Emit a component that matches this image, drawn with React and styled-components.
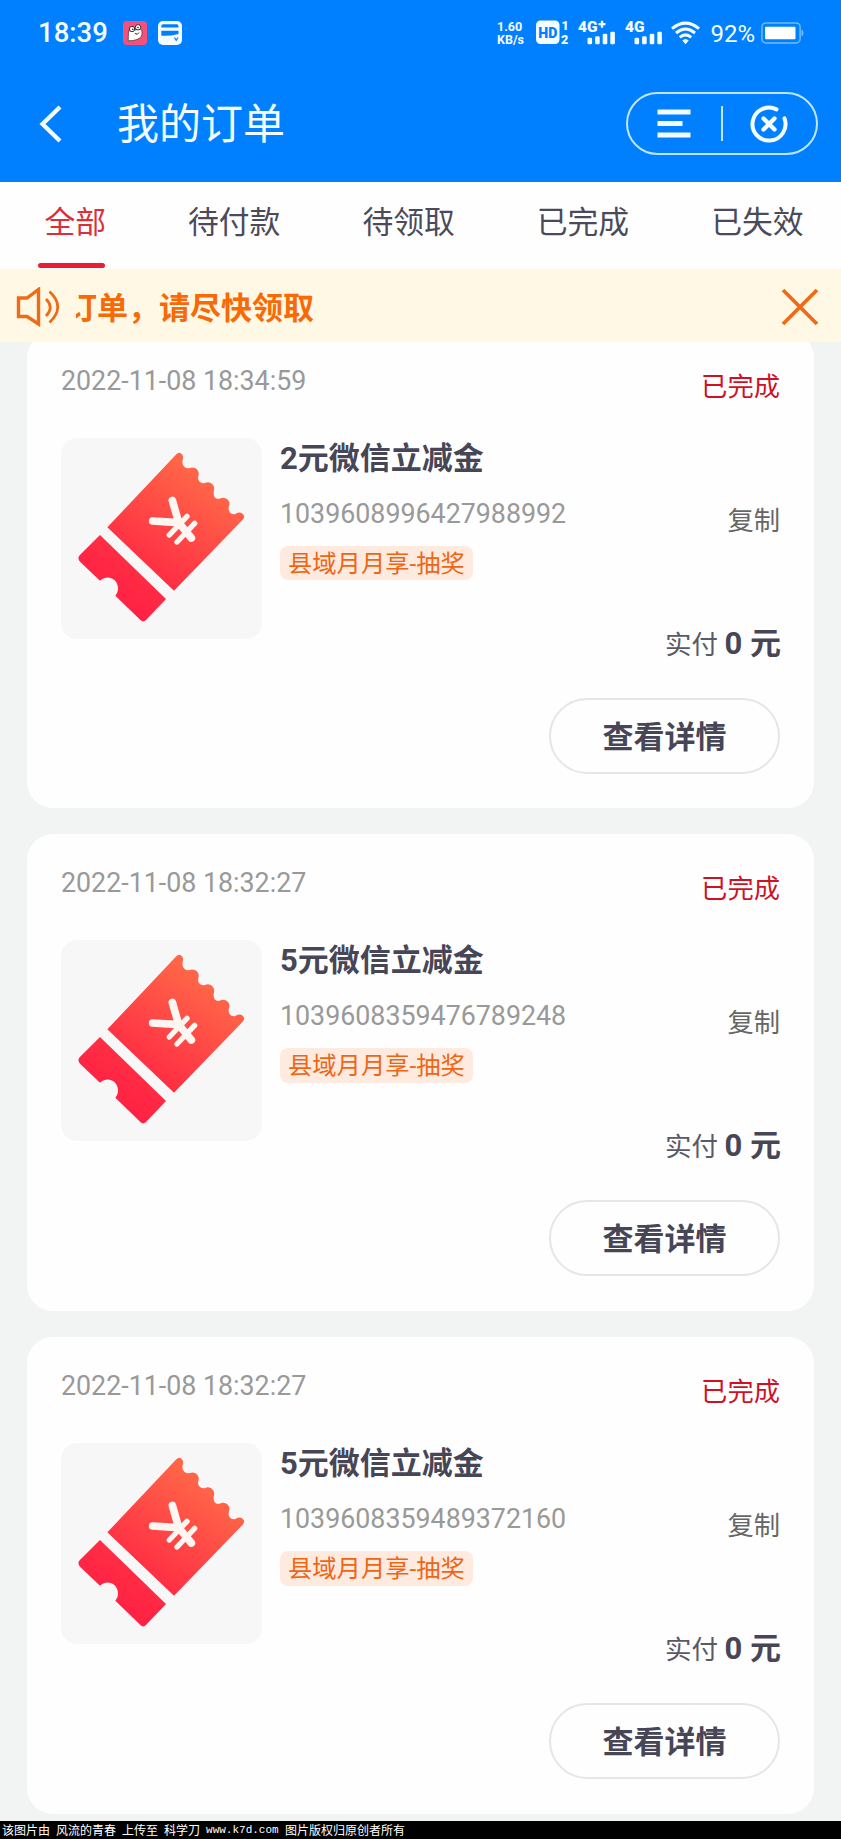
import React, { useState } from "react";
import styled, { createGlobalStyle } from "styled-components";

const tabs = ["全部", "待付款", "待领取", "已完成", "已失效"];

const orders = [
  {
    date: "2022-11-08 18:34:59",
    title: "2元微信立减金",
    number: "1039608996427988992",
  },
  {
    date: "2022-11-08 18:32:27",
    title: "5元微信立减金",
    number: "1039608359476789248",
  },
  {
    date: "2022-11-08 18:32:27",
    title: "5元微信立减金",
    number: "1039608359489372160",
  },
];

function AppIcon() {
  return (
    <svg width="24" height="24" viewBox="0 0 24 24">
      <rect width="24" height="24" rx="4" fill="#f4507c" />
      <path
        d="M5.500 10 L5.200 19.800 Q10 20 14 18.500 Q19.500 16.500 19 11 Q19 9 17.500 8Z"
        fill="#fff"
        stroke="#333"
        strokeWidth="0.700"
      />
      <circle cx="9" cy="8" r="2.700" fill="#fff" stroke="#222" strokeWidth="0.900" />
      <circle cx="15" cy="6.300" r="2.700" fill="#fff" stroke="#222" strokeWidth="0.900" />
      <circle cx="9.700" cy="8.300" r="0.800" fill="#222" />
      <circle cx="15" cy="6.500" r="0.800" fill="#222" />
      <path d="M12 12.500 Q14.500 14.500 16 11.500" fill="none" stroke="#222" />
    </svg>
  );
}

function CardIcon() {
  return (
    <svg width="24" height="24" viewBox="0 0 24 24">
      <rect width="24" height="24" rx="5" fill="#f4fcff" />
      <path
        d="M3.300 5.300 Q3.300 3.300 5 3.300 H19 Q20.500 3.300 20.500 5.300 V6.600 H3.300Z M3.300 9.700 H20.500 V13 Q12 15.200 3.300 14.800Z"
        fill="#0080ff"
      />
      <path
        d="M16.500 16.500 L18.200 19.300 L20 16.500"
        fill="none"
        stroke="#0080ff"
        strokeWidth="1.200"
      />
    </svg>
  );
}

function HdIcon() {
  return (
    <svg width="34" height="25" viewBox="0 0 34 25" overflow="visible">
      <rect y="0.500" width="23.500" height="23.500" rx="4.500" fill="#f4fcff" />
      <SvgText x="2.300" y="17.500" size={14} textLength="19" tone="#0080ff">
        HD
      </SvgText>
      <SvgText x="25.500" y="10" size={12.5}>
        1
      </SvgText>
      <SvgText x="25" y="23.800" size={12.5}>
        2
      </SvgText>
    </svg>
  );
}

function Signal({ label, plus }) {
  return (
    <svg width="38" height="25" viewBox="0 0 38 25" overflow="visible">
      <SvgText x="0" y="11.800" size={14.5} textLength="19.500">
        {label}
      </SvgText>
      {plus && <path d="M20.500 4.200 H27.500 M24 0.700 V7.700" stroke="#f4fcff" strokeWidth="2.300" />}
      {[6.5, 8, 10.5, 12.5].map((height, i) => (
        <rect
          key={height}
          x={9.5 + i * 7.6}
          y={24.2 - height}
          width="4.600"
          height={height}
          rx="1.300"
          fill="#f4fcff"
        />
      ))}
    </svg>
  );
}

function WifiIcon() {
  return (
    <svg width="29" height="24" viewBox="0 0 29 24">
      <g fill="none" stroke="#f4fcff" strokeWidth="3">
        <path d="M1 7.600 Q14.500 -3.400 28 7.600" />
        <path d="M5 12 Q14.500 4 24 12" />
        <path d="M8.800 16.300 Q14.500 11.500 20.200 16.300" />
      </g>
      <path d="M11.300 19.600 Q14.500 16.600 17.700 19.600 L14.500 23.300Z" fill="#f4fcff" />
    </svg>
  );
}

function BatteryIcon() {
  return (
    <svg width="43" height="22" viewBox="0 0 43 22">
      <rect
        x="0.900"
        y="0.900"
        width="38.200"
        height="20"
        rx="4"
        fill="none"
        stroke="#72bcff"
        strokeWidth="1.500"
      />
      <rect x="4" y="4.800" width="30.500" height="12.500" rx="1" fill="#fff" />
      <path d="M40.500 7.500 Q42.500 8 42.500 11 Q42.500 14 40.500 14.500Z" fill="#72bcff" />
    </svg>
  );
}

function TicketIcon({ id }) {
  return (
    <svg width="201" height="201" viewBox="0 0 603 603">
      <defs>
        <linearGradient
          id={id}
          gradientUnits="userSpaceOnUse"
          x1="180"
          y1="520"
          x2="450"
          y2="140"
        >
          <stop offset="0" stopColor="#ff2045" />
          <stop offset="0.300" stopColor="#ff2d44" />
          <stop offset="1" stopColor="#ff6548" />
        </linearGradient>
      </defs>
      <g fill={`url(#${id})`}>
        <path d="M139 268 L346 49 Q354 40 362 48 Q368 53 366 62 C360 78 370 94 386 90 C402 83 418 98 412 114 C408 128 420 139 432 135 C448 127 463 143 459 157 C455 175 463 185 476 182 C493 173 511 190 504 204 C499 220 511 233 524 227 Q540 219 548 231 Q552 237 545 245 L339 458Z" />
        <path d="M117 291 L315 483 L255 546 Q247 554 239 547 L163 473 C174 462 174 441 161 427 C147 415 131 417 117 428 L57 371 Q48 361 56 352Z" />
      </g>
      <g stroke="#fff5f1" strokeLinecap="round" fill="none">
        <path
          d="M334 187 L353 254 L275 249 M353 254 L391 300"
          strokeWidth="23"
          strokeLinejoin="round"
        />
        <path d="M325 291 L378 235 M348 312 L401 256" strokeWidth="16" />
      </g>
    </svg>
  );
}

function SpeakerIcon() {
  return (
    <svg width="44" height="40" viewBox="0 0 44 40">
      <g fill="none" stroke="#ee6c17" strokeWidth="3.400">
        <path d="M2.500 11 H11 L22.500 2.500 V37 L11 29.500 H2.500Z" />
        <path d="M30 12 Q38.500 20.500 30 29" strokeWidth="2.800" />
        <path d="M33.500 4.500 Q50 20 33.500 35.500" strokeWidth="2.800" />
      </g>
    </svg>
  );
}

function OrderCard({ id, order }) {
  return (
    <Card>
      <CardHead>
        <OrderDate>{order.date}</OrderDate>
        <Status>已完成</Status>
      </CardHead>
      <CardBody>
        <Thumbnail>
          <TicketIcon id={id} />
        </Thumbnail>
        <Details>
          <Title>{order.title}</Title>
          <NumberRow>
            <OrderNumber>{order.number}</OrderNumber>
            <CopyButton type="button">复制</CopyButton>
          </NumberRow>
          <Tag>县域月月享-抽奖</Tag>
        </Details>
      </CardBody>
      <Payment>
        实付 <Amount>0 元</Amount>
      </Payment>
      <DetailButton type="button">查看详情</DetailButton>
    </Card>
  );
}

function App() {
  const [active, setActive] = useState("全部");
  const [showNotice, setShowNotice] = useState(true);

  return (
    <>
      <GlobalStyle />
      <Page>
        <Header>
          <StatusBar>
            <Clock>18:39</Clock>
            <AppIcon />
            <CardIcon />
            <StatusRight>
              <Speed>
                <span>1.60</span>
                <span>KB/s</span>
              </Speed>
              <HdIcon />
              <Signal label="4G" plus />
              <Signal label="4G" />
              <WifiIcon />
              <Percent>92%</Percent>
              <BatteryIcon />
            </StatusRight>
          </StatusBar>
          <NavBar>
            <BackButton type="button">
              <svg width="23" height="38" viewBox="0 0 23 38">
                <path
                  d="M21 2 L3.500 19 L21 36"
                  fill="none"
                  stroke="#f4fcff"
                  strokeWidth="4.300"
                />
              </svg>
            </BackButton>
            <PageTitle>我的订单</PageTitle>
            <Capsule>
              <svg width="34" height="29" viewBox="0 0 34 29">
                <g stroke="#f4fcff" strokeWidth="4.800">
                  <path d="M0.500 3 H33.500 M0.500 14.500 H25.500 M0.500 26 H33.500" />
                </g>
              </svg>
              <Divider />
              <svg width="38" height="38" viewBox="0 0 38 38">
                <g fill="none" stroke="#f4fcff" strokeLinecap="round">
                  <path
                    d="M26.500 4.400 A16.500 16.500 0 1 0 34.500 13.400"
                    strokeWidth="4"
                  />
                  <path
                    d="M13.500 13.500 L24.500 24.500 M24.500 13.500 L13.500 24.500"
                    strokeWidth="4.300"
                  />
                </g>
              </svg>
            </Capsule>
          </NavBar>
        </Header>
        <Tabs>
          {tabs.map((tab) => (
            <Tab
              key={tab}
              type="button"
              $active={tab === active}
              onClick={() => setActive(tab)}
            >
              <span>{tab}</span>
              {tab === active && <Underline />}
            </Tab>
          ))}
        </Tabs>
        {showNotice && (
          <Notice>
            <SpeakerIcon />
            <Marquee>
              <MarqueeText>订单，请尽快领取</MarqueeText>
            </Marquee>
            <CloseButton type="button" onClick={() => setShowNotice(false)}>
              <svg width="38" height="38" viewBox="0 0 38 38">
                <path
                  d="M2 2 L36 36 M36 2 L2 36"
                  stroke="#ee6c17"
                  strokeWidth="3.800"
                />
              </svg>
            </CloseButton>
          </Notice>
        )}
        <OrderList>
          {orders.map((order, i) => (
            <OrderCard key={order.number} id={`ticket-${i}`} order={order} />
          ))}
        </OrderList>
        <Footer>
          <span>该图片由</span>
          <span>风流的青春</span>
          <span>上传至</span>
          <span>科学刀</span>
          <Site>www.k7d.com</Site>
          <span>图片版权归原创者所有</span>
        </Footer>
      </Page>
    </>
  );
}

export default App;

const GlobalStyle = createGlobalStyle`
  * {
    box-sizing: border-box;
  }

  body {
    margin: 0;
    background: #f1f4f3;
    font-family: Roboto, "Noto Sans CJK SC", sans-serif;
  }

  button {
    padding: 0;
    border: 0;
    background: none;
    color: inherit;
    font: inherit;
  }

  svg {
    display: block;
    flex-shrink: 0;
  }
`;

const Page = styled.div`
  display: flex;
  flex-direction: column;
  width: 841px;
  height: 1839px;
  overflow: hidden;
`;

const Header = styled.header`
  flex-shrink: 0;
  height: 182px;
  background: #0080ff;
  color: #f4fcff;
`;

const StatusBar = styled.div`
  display: flex;
  align-items: center;
  height: 65px;
  padding: 0 37px 0 38px;

  & > svg {
    margin-right: 11px;
  }
`;

const Clock = styled.span`
  width: 85px;
  font-size: 27.500px;
  font-weight: 500;
`;

const StatusRight = styled.div`
  display: flex;
  align-items: center;
  gap: 8.500px;
  margin-left: auto;
`;

const Speed = styled.div`
  display: flex;
  flex-direction: column;
  width: 30px;
  font-size: 12.500px;
  font-weight: 700;
  line-height: 13px;
`;

const SvgText = styled.text.attrs({ lengthAdjust: "spacingAndGlyphs" })`
  font-family: Roboto, sans-serif;
  font-size: ${(props) => props.size}px;
  font-weight: 900;
  fill: ${(props) => props.tone || "#f4fcff"};
`;

const Percent = styled.span`
  width: 44px;
  margin: 4px -2px 0 2px;
  font-size: 24px;
  line-height: 25px;
`;

const NavBar = styled.div`
  display: flex;
  align-items: center;
  height: 117px;
  padding: 0 23px 0 39px;
`;

const BackButton = styled.button`
  width: 78px;
`;

const PageTitle = styled.h1`
  margin: 2px 0 0;
  font-size: 42px;
  font-weight: 400;
  line-height: 60px;
`;

const Capsule = styled.div`
  display: flex;
  align-items: center;
  justify-content: space-between;
  width: 192px;
  height: 63px;
  margin-left: auto;
  padding: 0 28px 0 29px;
  border: 2px solid #bfe6ff;
  border-radius: 32px;
`;

const Divider = styled.i`
  width: 2px;
  height: 35px;
  margin-left: 2px;
  background: #bfe6ff;
`;

const Tabs = styled.nav`
  display: flex;
  flex-shrink: 0;
  gap: 82px;
  height: 87px;
  padding-left: 38px;
  background: #fefefe;
`;

const Tab = styled.button`
  display: flex;
  flex-direction: column;
  align-items: flex-end;
  width: ${(props) => (props.$active ? "68px" : "auto")};
  padding-top: 18px;
  color: ${(props) => (props.$active ? "#dc2f3c" : "#4b4a5b")};
  font-size: 30.800px;
  line-height: 46px;
  white-space: nowrap;
`;

const Underline = styled.i`
  align-self: flex-start;
  width: 67px;
  height: 5.500px;
  margin-top: 16.500px;
  border-radius: 3px;
  background: #ec1c34;
`;

const Notice = styled.div`
  position: relative;
  z-index: 1;
  display: flex;
  flex-shrink: 0;
  align-items: center;
  height: 72.500px;
  padding: 4px 22px 0 16px;
  background: #fff8e5;
`;

const Marquee = styled.div`
  flex: 1;
  margin-left: 16px;
  overflow: hidden;
`;

const MarqueeText = styled.p`
  margin: 4px 0 0 -10px;
  color: #f76a05;
  font-size: 31px;
  font-weight: 700;
  line-height: 48px;
`;

const CloseButton = styled.button`
  width: 38px;
`;

const OrderList = styled.main`
  display: flex;
  flex-direction: column;
  gap: 26.250px;
  height: 1489.500px;
  margin-top: -10px;
  padding: 0 27px;
`;

const Card = styled.article`
  display: flex;
  flex-direction: column;
  flex-shrink: 0;
  height: 476.500px;
  padding: 32px 34px 0;
  border-radius: 26px;
  background: #fefefe;
`;

const CardHead = styled.div`
  display: flex;
  justify-content: space-between;
  height: 74px;
`;

const OrderDate = styled.time`
  color: #999;
  font-size: 26.800px;
  line-height: 34px;
`;

const Status = styled.span`
  color: #cf1126;
  font-size: 26.300px;
  line-height: 47px;
`;

const CardBody = styled.div`
  display: flex;
  gap: 18px;
`;

const Thumbnail = styled.div`
  width: 201px;
  height: 201px;
  border-radius: 16px;
  background: #f7f7f7;
`;

const Details = styled.div`
  flex: 1;
`;

const Title = styled.h2`
  margin: 0;
  color: #474657;
  font-size: 31px;
  font-weight: 700;
  line-height: 42px;
`;

const NumberRow = styled.div`
  display: flex;
  justify-content: space-between;
  height: 66px;
`;

const OrderNumber = styled.span`
  color: #999;
  font-size: 26.800px;
  line-height: 69px;
`;

const CopyButton = styled.button`
  color: #666;
  font-size: 26.300px;
  line-height: 82px;
`;

const Tag = styled.span`
  display: inline-block;
  height: 34.500px;
  padding: 0 8px;
  border-radius: 8px;
  background: #ffeadf;
  color: #ee6614;
  font-size: 24.300px;
  line-height: 35px;
`;

const Payment = styled.div`
  align-self: flex-end;
  margin: -18px -1px 0 0;
  color: #5a5968;
  font-size: 26.500px;
  line-height: 46px;
`;

const Amount = styled.strong`
  color: #474657;
  font-size: 31px;
  font-weight: 700;
`;

const DetailButton = styled.button`
  align-self: flex-end;
  width: 231px;
  height: 76px;
  margin-top: 30px;
  padding-bottom: 3px;
  border: 2px solid #e6e6e6;
  border-radius: 38px;
  color: #474657;
  font-size: 31px;
  font-weight: 700;
`;

const Footer = styled.footer`
  display: flex;
  flex-shrink: 0;
  align-items: center;
  gap: 6px;
  height: 18px;
  padding-left: 2px;
  background: #000;
  color: #fff;
  font-family: "Noto Sans CJK SC", sans-serif;
  font-size: 12px;
  line-height: 18px;
`;

const Site = styled.span`
  width: 73px;
  font-family: "Liberation Mono", monospace;
  font-size: 11px;
`;
